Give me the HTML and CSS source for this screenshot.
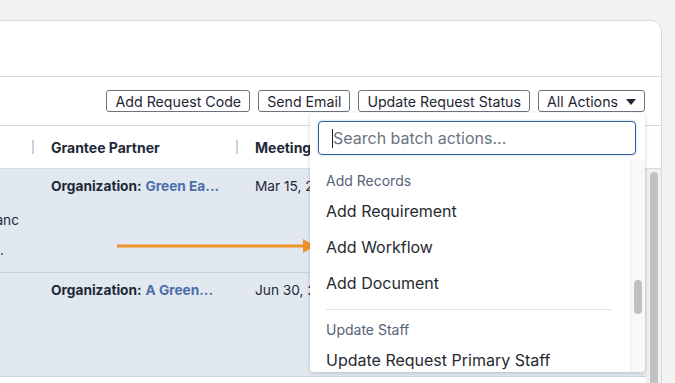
FILE: index.html
```html
<!DOCTYPE html>
<html lang="en">
<head>
  <meta charset="UTF-8">
  <title>Requests</title>
  <link rel="stylesheet" href="styles.css">
</head>
<body>
  <div class="card">
    <div class="card-header"></div>
    <div class="toolbar">
      <button class="btn">Add Request Code</button>
      <button class="btn">Send Email</button>
      <button class="btn">Update Request Status</button>
      <div class="actions-wrap">
        <button class="btn">All Actions <span class="caret"></span></button>
        <div class="dropdown">
          <div class="search-box">
            <span class="cursor"></span>
            <input class="search-input" type="text" placeholder="Search batch actions...">
          </div>
          <div class="menu">
            <div class="menu-list">
              <div class="group-label">Add Records</div>
              <div class="menu-item">Add Requirement</div>
              <div class="menu-item">Add Workflow</div>
              <div class="menu-item">Add Document</div>
              <div class="menu-sep"></div>
              <div class="group-label">Update Staff</div>
              <div class="menu-item">Update Request Primary Staff</div>
            </div>
            <div class="menu-scroll"><div class="menu-thumb"></div></div>
          </div>
        </div>
      </div>
    </div>
    <div class="table-head">
      <div class="th"></div>
      <div class="th"><span class="col-sep"></span>Grantee Partner</div>
      <div class="th"><span class="col-sep"></span>Meeting Date</div>
    </div>
    <div class="table-body">
      <div class="rows">
        <div class="row">
          <div class="td first">
            <div class="line spacer"></div>
            <div class="line second">Community Resilience Financ</div>
            <div class="line third">Climate Adaptation Fund.</div>
          </div>
          <div class="td"><b>Organization:</b> <a class="org-link">Green Ea...</a></div>
          <div class="td">Mar 15, 2024</div>
        </div>
        <div class="row">
          <div class="td first"></div>
          <div class="td"><b>Organization:</b> <a class="org-link">A Green...</a></div>
          <div class="td">Jun 30, 2024</div>
        </div>
      </div>
      <div class="body-scroll"><div class="body-thumb"></div></div>
    </div>
  </div>

  <svg class="pointer" width="200" height="16" viewBox="0 0 200 16">
    <line x1="0" y1="8" x2="188" y2="8" stroke="#f0922c" stroke-width="3"/>
    <polygon points="186,1 198,8 186,15" fill="#f0922c"/>
  </svg>
</body>
</html>
```

FILE: styles.css
```css
body {
  margin: 0;
  padding: 0;
  font-family: Inter, "Noto Sans", sans-serif;
  background-color: #f2f2f2;
  overflow: hidden;
  height: 383px;
}

.card {
  margin-top: 20px;
  margin-left: -268px;
  width: 930px;
  height: 400px;
  box-sizing: border-box;
  background: #fff;
  border: 1px solid #d3dbe5;
  border-top-right-radius: 11px;
}

.card-header {
  height: 55px;
  border-bottom: 1px solid #d3dbe5;
}

.toolbar {
  height: 48px;
  display: flex;
  align-items: center;
  justify-content: flex-end;
  gap: 8px;
  padding-right: 16px;
  border-bottom: 1px solid #d3dbe5;
}

.btn {
  height: 22px;
  padding: 0 8px;
  font-family: Inter, sans-serif;
  font-size: 14.2px;
  color: #1f2733;
  background: #fff;
  border: 1px solid #6b7380;
  border-radius: 3px;
  display: flex;
  align-items: center;
  gap: 8px;
}

.caret {
  width: 0;
  height: 0;
  border-left: 5px solid transparent;
  border-right: 5px solid transparent;
  border-top: 6px solid #1f2733;
  margin-top: 1px;
}

.actions-wrap {
  position: relative;
}

.dropdown {
  position: absolute;
  top: calc(100% + 1px);
  right: 0;
  width: 335px;
  height: 259px;
  background: #fff;
  border-radius: 4px;
  box-shadow: 0 1px 4px rgba(0, 0, 0, 0.18);
  z-index: 5;
  overflow: hidden;
}

.search-box {
  position: relative;
  margin: 8px 9px 5px 8px;
}

.search-input {
  width: 100%;
  height: 34px;
  box-sizing: border-box;
  border: 1px solid #2f5f9e;
  border-radius: 4px;
  padding: 0 14px;
  font-family: Inter, sans-serif;
  font-size: 16px;
  color: #222;
  box-shadow: 0 0 3px rgba(47, 95, 158, 0.3);
  outline: none;
}

.search-input::placeholder {
  color: #6b7480;
}

.cursor {
  position: absolute;
  left: 14px;
  top: 8px;
  width: 1px;
  height: 19px;
  background: #222;
}

.menu {
  display: flex;
  height: 212px;
}

.menu-list {
  flex: 1;
  padding-top: 8px;
}

.group-label {
  height: 25px;
  line-height: 25px;
  padding-left: 16px;
  font-size: 14px;
  color: #56627a;
}

.menu-item {
  height: 36px;
  line-height: 36px;
  padding-left: 16px;
  font-size: 16px;
  color: #262a30;
}

.menu-sep {
  height: 1px;
  background: #dfe3e8;
  margin: 8px 18px 7px 16px;
}

.menu-scroll {
  width: 14px;
  background: #f8f8f8;
  border-left: 1px solid #ececec;
  position: relative;
}

.menu-thumb {
  position: absolute;
  left: 3px;
  top: 120px;
  width: 8px;
  height: 34px;
  border-radius: 4px;
  background: #c1c1c1;
}

.table-head {
  display: grid;
  grid-template-columns: 300px 204px 1fr;
  height: 42px;
  border-bottom: 1px solid #d3dbe5;
}

.th {
  position: relative;
  display: flex;
  align-items: center;
  padding-left: 18px;
  font-size: 14px;
  font-weight: 700;
  color: #1e2838;
}

.col-sep {
  position: absolute;
  left: -1px;
  top: 14px;
  width: 2px;
  height: 14px;
  background: #c8d2de;
}

.table-body {
  display: flex;
}

.rows {
  flex: 1;
}

.row {
  display: grid;
  grid-template-columns: 300px 204px 1fr;
  height: 103px;
  background: #e2e8f0;
  border-bottom: 1px solid #c9d3df;
}

.td {
  padding: 8px 0 0 18px;
  font-size: 13.7px;
  line-height: 18px;
  color: #1e2838;
  white-space: nowrap;
  overflow: hidden;
}

.td b {
  font-weight: 700;
}

.org-link {
  color: #4a6ea8;
  font-weight: 700;
}

.td.first {
  padding: 8px 0 0 0;
}

.line {
  height: 18px;
  text-align: right;
  padding-right: 14px;
}

.line.second {
  margin-top: 16px;
}

.line.third {
  margin-top: 12px;
  padding-right: 29px;
}

.body-scroll {
  width: 14px;
  height: 220px;
  background: #f1f1f1;
  border-left: 1px solid #e6e6e6;
  position: relative;
}

.body-thumb {
  position: absolute;
  left: 3px;
  top: 3px;
  width: 8px;
  height: 230px;
  border-radius: 4px;
  background: #c1c1c1;
}

.pointer {
  position: absolute;
  left: 117px;
  top: 238px;
}
```
